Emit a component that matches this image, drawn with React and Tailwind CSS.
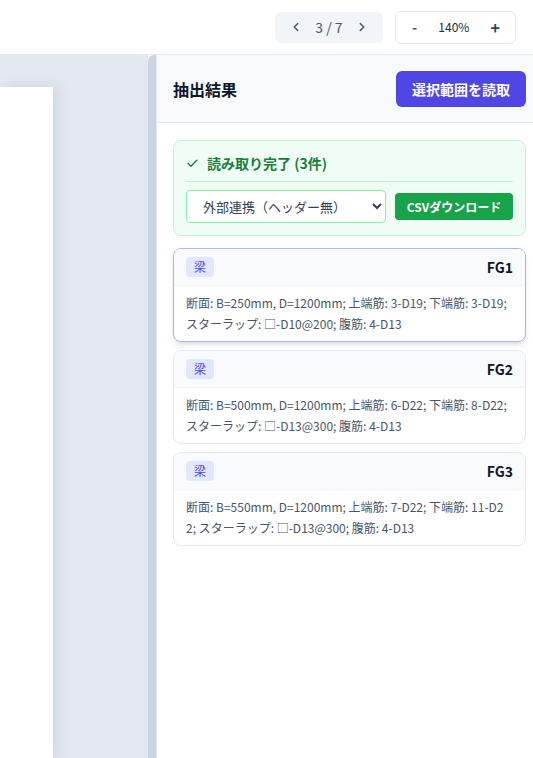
import React, { useState } from 'react';

const results = [
  { id: 'FG1', kind: '梁', text: '断面: B=250mm, D=1200mm; 上端筋: 3-D19; 下端筋: 3-D19; スターラップ: □-D10@200; 腹筋: 4-D13' },
  { id: 'FG2', kind: '梁', text: '断面: B=500mm, D=1200mm; 上端筋: 6-D22; 下端筋: 8-D22; スターラップ: □-D13@300; 腹筋: 4-D13' },
  { id: 'FG3', kind: '梁', text: '断面: B=550mm, D=1200mm; 上端筋: 7-D22; 下端筋: 11-D22; スターラップ: □-D13@300; 腹筋: 4-D13' },
];

const App = () => {
  const [selected] = useState('FG1');

  return (
    <div className="h-[758px] w-[533px] flex flex-col bg-white overflow-hidden font-['Noto_Sans_CJK_JP','Noto_Sans',sans-serif]">
      {/* ツールバー */}
      <div className="h-[55px] shrink-0 flex items-center justify-end gap-3 pr-[17px] border-b border-[#e2e8f0] bg-white">
        <div className="h-[31px] w-[108px] flex items-center justify-between px-[14px] bg-[#f1f5f9] rounded-md text-[#475569] text-sm">
          <svg width="14" height="14" viewBox="0 0 24 24" fill="none" stroke="currentColor" strokeWidth="2.5" strokeLinecap="round" strokeLinejoin="round"><path d="M15 18l-6-6 6-6" /></svg>
          <span>3 / 7</span>
          <svg width="14" height="14" viewBox="0 0 24 24" fill="none" stroke="currentColor" strokeWidth="2.5" strokeLinecap="round" strokeLinejoin="round"><path d="M9 18l6-6-6-6" /></svg>
        </div>
        <div className="h-[33px] w-[121px] flex items-center justify-between pl-[16px] pr-[15px] border border-[#e2e8f0] rounded-md text-xs text-[#1e293b]">
          <span className="text-sm font-bold text-[#475569]">-</span>
          <span>140%</span>
          <span className="text-base font-bold text-[#334155]">+</span>
        </div>
      </div>

      <div className="flex flex-1 min-h-0">
        {/* プレビュー */}
        <div className="w-[148px] shrink-0 bg-[#e2e8f0] pt-[32px]">
          <div className="w-[53px] h-full bg-white shadow-[4px_0_12px_rgba(100,116,139,0.15)]" />
        </div>
        <div className="w-[8px] shrink-0 bg-[#cbd5e1] rounded-tl-md" />

        {/* 抽出結果パネル */}
        <div className="flex-1 border-l border-[#e2e8f0] flex flex-col bg-white">
          <div className="h-[68px] shrink-0 flex items-center justify-between pl-4 pr-[10px] bg-[#f8fafc] border-b border-[#e2e8f0]">
            <h2 className="text-base font-bold text-[#0f172a]">抽出結果</h2>
            <button className="h-[36px] w-[130px] rounded-md bg-[#4f46e5] text-white text-sm font-bold">選択範囲を読取</button>
          </div>

          <div className="pl-4 pr-[10px] pt-[17px] flex flex-col gap-3">
            <div className="border border-[#bbf7d0] bg-[#f0fdf4] rounded-lg px-3 pt-3 pb-3">
              <div className="flex items-center gap-2 text-[#15803d] text-sm font-semibold pb-2 border-b border-[#bbf7d0]">
                <svg width="13" height="13" viewBox="0 0 24 24" fill="none" stroke="currentColor" strokeWidth="2.5" strokeLinecap="round" strokeLinejoin="round"><path d="M20 6L9 17l-5-5" /></svg>
                <span>読み取り完了 (3件)</span>
              </div>
              <div className="flex items-center gap-[9px] mt-2">
                <select className="h-[33px] w-[200px] border border-[#86efac] rounded bg-white text-[13px] text-[#334155] pl-3 pr-1">
                  <option>外部連携（ヘッダー無）</option>
                </select>
                <button className="h-[27px] w-[118px] bg-[#16a34a] rounded text-white text-xs font-bold">CSVダウンロード</button>
              </div>
            </div>

            <div className="flex flex-col gap-2">
              {results.map((r) => (
                <div
                  key={r.id}
                  className={
                    r.id === selected
                      ? 'border border-[#a5b4fc] rounded-lg overflow-hidden shadow-md'
                      : 'border border-[#e2e8f0] rounded-lg overflow-hidden'
                  }
                >
                  <div className="h-[37px] flex items-center justify-between px-3 bg-[#f8fafc] border-b border-[#f1f5f9]">
                    <span className="h-[20px] w-[28px] flex items-center justify-center rounded bg-[#e0e7ff] text-[#4f46e5] text-xs">{r.kind}</span>
                    <span className="text-sm font-bold text-[#0f172a]">{r.id}</span>
                  </div>
                  <div className="px-3 pt-[6px] pb-[7px] text-xs leading-[21px] text-[#475569] break-all">{r.text}</div>
                </div>
              ))}
            </div>
          </div>
        </div>
      </div>
    </div>
  );
};

export default App;
